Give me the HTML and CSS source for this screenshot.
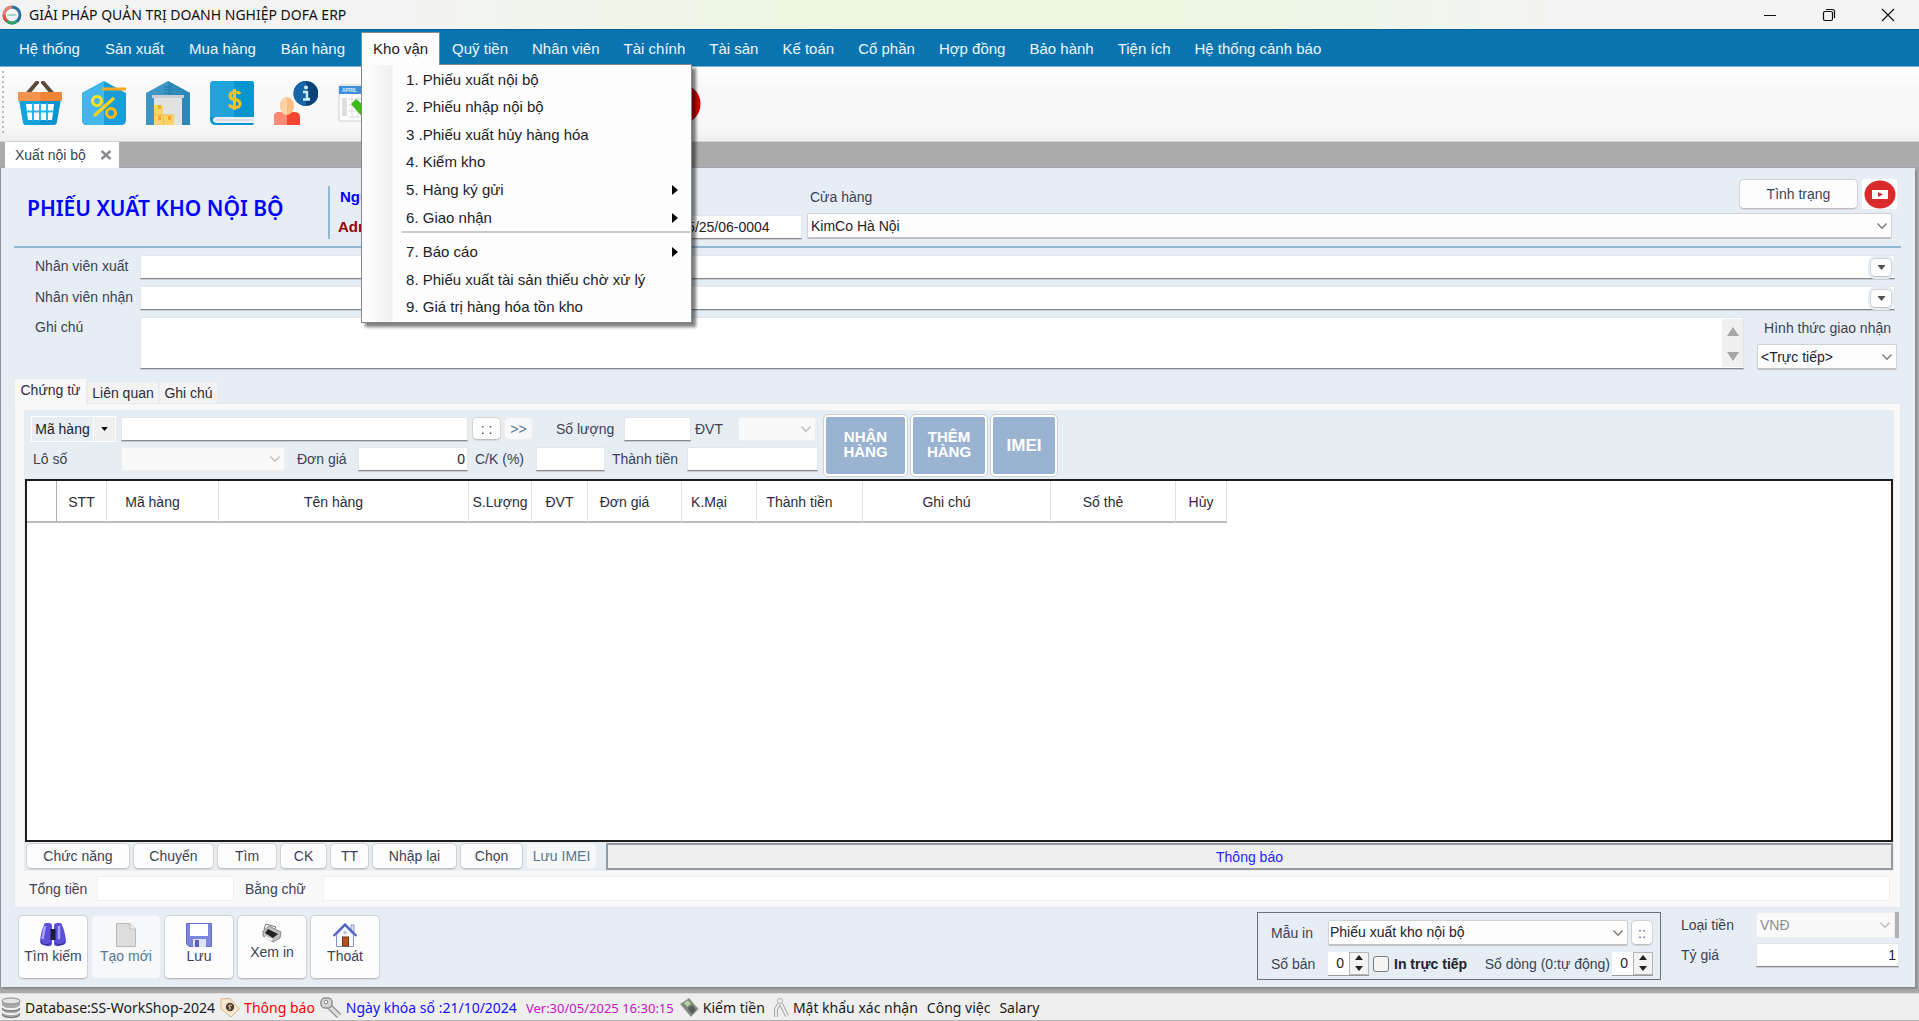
FILE: index.html
```html
<!DOCTYPE html>
<html lang="vi">
<head>
<meta charset="utf-8">
<title>GIẢI PHÁP QUẢN TRỊ DOANH NGHIỆP DOFA ERP</title>
<link rel="stylesheet" href="styles.css">
</head>
<body>
<svg class="sprite" aria-hidden="true">
  <symbol id="chevron" viewBox="0 0 12 8"><path d="M1.500 1.500L6 6.200L10.500 1.500" fill="none" stroke="currentColor" stroke-width="1.300"/></symbol>
  <symbol id="down" viewBox="0 0 10 6"><path d="M0 0H10L5 6Z" fill="currentColor"/></symbol>
  <symbol id="up" viewBox="0 0 10 6"><path d="M0 6H10L5 0Z" fill="currentColor"/></symbol>
  <symbol id="right" viewBox="0 0 6 10"><path d="M0 0V10L6 5Z" fill="currentColor"/></symbol>
</svg>
<div class="window">
  <header class="titlebar">
    <svg class="app-icon" width="20" height="20" viewBox="0 0 20 20" fill="none" stroke-width="3">
      <circle cx="10" cy="10" r="8" stroke="#2b6f9e"/>
      <path d="M10 2A8 8 0 0 0 2 10" stroke="#f08070"/>
      <path d="M2 10A8 8 0 0 0 5 16.200" stroke="#e2543c"/>
      <path d="M5 16.200A8 8 0 0 0 15 16.200" stroke="#2fa866"/>
      <path d="M5.500 10H14.500" stroke="#a9d5cf" stroke-width="2"/>
    </svg>
    <span class="app-title">GIẢI PHÁP QUẢN TRỊ DOANH NGHIỆP DOFA ERP</span>
    <div class="window-controls">
      <button aria-label="Minimize"><svg width="14" height="14" viewBox="0 0 14 14"><path d="M1 7.500H13" stroke="#111"/></svg></button>
      <button aria-label="Restore"><svg width="14" height="14" viewBox="0 0 14 14" fill="none" stroke="#111" stroke-width="1.200"><rect x="1.500" y="3.500" width="9" height="9" rx="1.500"/><path d="M4 1.500H10.500A2 2 0 0 1 12.500 3.500V10"/></svg></button>
      <button aria-label="Close"><svg width="14" height="14" viewBox="0 0 14 14"><path d="M1 1L13 13M13 1L1 13" stroke="#111" stroke-width="1.200"/></svg></button>
    </div>
  </header>

  <nav class="menubar">
    <a href="#">Hệ thống</a>
    <a href="#">Sản xuất</a>
    <a href="#">Mua hàng</a>
    <a href="#">Bán hàng</a>
    <div class="menu-open">
      <a href="#" class="current">Kho vận</a>
      <ul class="dropdown">
        <li><a href="#">1. Phiếu xuất nội bộ</a></li>
        <li><a href="#">2. Phiếu nhập nội bộ</a></li>
        <li><a href="#">3 .Phiếu xuất hủy hàng hóa</a></li>
        <li><a href="#">4. Kiểm kho</a></li>
        <li><a href="#">5. Hàng ký gửi<svg width="6" height="10"><use href="#right"/></svg></a></li>
        <li><a href="#">6. Giao nhận<svg width="6" height="10"><use href="#right"/></svg></a></li>
        <li class="separator"></li>
        <li><a href="#">7. Báo cáo<svg width="6" height="10"><use href="#right"/></svg></a></li>
        <li><a href="#">8. Phiếu xuất tài sản thiếu chờ xử lý</a></li>
        <li><a href="#">9. Giá trị hàng hóa tồn kho</a></li>
      </ul>
    </div>
    <a href="#">Quỹ tiền</a>
    <a href="#">Nhân viên</a>
    <a href="#">Tài chính</a>
    <a href="#">Tài sản</a>
    <a href="#">Kế toán</a>
    <a href="#">Cổ phần</a>
    <a href="#">Hợp đồng</a>
    <a href="#">Bảo hành</a>
    <a href="#">Tiện ích</a>
    <a href="#">Hệ thống cảnh báo</a>
  </nav>

  <div class="toolbar">
    <button aria-label="Bán hàng"><svg width="44" height="44" viewBox="0 0 44 44">
      <path d="M10 12L19 1.500M34 12L25 1.500" stroke="#5a4a3a" stroke-width="4" stroke-linecap="round"/>
      <path d="M1 18H43L39 41Q38.500 44 36 44H8Q5.500 44 5 41Z" fill="#0d93cf"/>
      <path d="M1 18H22V44H8Q5.500 44 5 41Z" fill="#12a3dc"/>
      <path d="M8 23H36L34 39H10Z" fill="#fff"/>
      <path d="M8 30.500H36M15 22V40M22 22V40M29 22V40" stroke="#29b6ee" stroke-width="2"/>
      <rect x="0" y="11" width="44" height="9" rx="1" fill="#f08537"/><path d="M0 11H22V20H1Q0 20 0 19Z" fill="#f4934b"/>
    </svg></button>
    <button aria-label="Khuyến mãi"><svg width="44" height="44" viewBox="0 0 44 44">
      <path d="M22 0L0 12V39Q0 44 5 44H39Q44 44 44 39V12Z" fill="#1b9bd7"/>
      <path d="M22 0L0 12V39Q0 44 5 44H22Z" fill="#45b6ec"/>
      <path d="M20 8H44" stroke="#f9a825" stroke-width="3"/>
      <circle cx="15" cy="20" r="4.500" fill="none" stroke="#ffe21f" stroke-width="3.200"/>
      <circle cx="29" cy="32" r="4.500" fill="none" stroke="#fdb811" stroke-width="3.200"/>
      <path d="M12 35L32 17" stroke="#ffd21a" stroke-width="3.200"/>
    </svg></button>
    <button aria-label="Kho"><svg width="44" height="44" viewBox="0 0 44 44">
      <path d="M22 0L0 12V44H44V12Z" fill="#3d96c6"/><path d="M22 0V44H44V12Z" fill="#2e88b8"/>
      <path d="M18 6H26M18 9H26M18 12H26" stroke="#1f78a7"/>
      <rect x="8" y="17" width="28" height="27" fill="#e2e2e2"/><rect x="6" y="14" width="32" height="3" fill="#c9ced3"/>
      <path d="M8 24H17V34H28V44H8Z" fill="#fbd36b"/>
      <path d="M8 34H28M17.500 34V44" stroke="#eebb45"/>
      <path d="M12 24H15V28H12ZM12 35H15V39H12ZM22 35H25V39H22Z" fill="#f0a92a"/>
    </svg></button>
    <button aria-label="Kế toán"><svg width="44" height="44" viewBox="0 0 44 44">
      <path d="M4 0H42Q44 0 44 2V42Q44 44 42 44H6Q0 44 0 38V4Q0 0 4 0Z" fill="#0894ce"/>
      <path d="M4 0H24V36H0V4Q0 0 4 0Z" fill="#22a3da"/>
      <path d="M44 36H7Q3 36 3 39Q3 42 7 42H44Z" fill="#eceff2"/><path d="M6 39H44" stroke="#c6cdd3"/>
      <path d="M30 13Q29 11 25 11Q20 11 20 15Q20 18 24.500 18.500Q30 19 30 23Q30 26.500 25 26.500Q20 26.500 19.500 23.500M24.500 8V29" fill="none" stroke="#fcc21b" stroke-width="3"/>
    </svg></button>
    <button aria-label="Thông tin khách hàng"><svg width="44" height="44" viewBox="0 0 44 44">
      <path d="M0 44V36Q0 31 6 31H20Q26 31 26 36V44Z" fill="#f2452f"/><path d="M0 44V36Q0 31 6 31H13V44Z" fill="#ff8a73"/>
      <ellipse cx="13" cy="25" rx="7" ry="9" fill="#fbbd84"/><path d="M13 16A7 9 0 0 0 13 34Z" fill="#ffd3a6"/>
      <circle cx="32" cy="12.500" r="12.500" fill="#0a4377"/><path d="M32 0A12.500 12.500 0 0 0 32 25Z" fill="#1665a8"/>
      <circle cx="32" cy="6.500" r="2" fill="#c9f0ff"/><path d="M29 11H33V18H36M29 18.500H36" fill="none" stroke="#c9f0ff" stroke-width="2.400"/>
    </svg></button>
    <button aria-label="Lịch"><svg width="44" height="44" viewBox="0 0 44 44">
      <rect x="1" y="4" width="42" height="36" rx="1" fill="#fdfdfd" stroke="#cfcfcf"/><rect x="1" y="5" width="42" height="8" fill="#3e8edb"/>
      <text x="4" y="11" font-size="5" font-weight="bold" fill="#dcefff">APRIL</text>
      <path d="M4 17H9V35H4Z" fill="#dedede"/><path d="M10 18H40M10 24H40M10 30H40M10 36H40M14 15V37M20 15V37" stroke="#dcdcdc"/>
      <path d="M13 23L18 18L30 28L38 14V24L26 38Z" fill="#3eb91f"/>
    </svg></button>
    <button class="far" aria-label="Video"><svg width="44" height="44" viewBox="0 0 44 44"><circle cx="22" cy="23" r="16" fill="#fff" stroke="#d60000" stroke-width="9"/></svg></button>
  </div>

  <div class="doc-tabs">
    <div class="doc-tab"><span>Xuất nội bộ</span>
      <button aria-label="Đóng"><svg width="12" height="10" viewBox="0 0 12 10"><path d="M1.500 1L10.500 9M10.500 1L1.500 9" stroke="#8a8a94" stroke-width="2.400"/></svg></button>
    </div>
  </div>

  <main class="form">
    <section class="form-head">
      <h1>PHIẾU XUẤT KHO NỘI BỘ</h1>
      <div class="user"><b class="user-label">Người</b><b class="user-name">Admin</b></div>
      <div class="code">
        <label for="code">Số phiếu cũ</label>
        <input id="code" class="box" value="PXNB5/25/06-0004">
      </div>
      <div class="store">
        <div class="store-top">
          <label for="store">Cửa hàng</label>
          <button class="btn status-btn">Tình trạng</button>
          <a href="#" class="video" aria-label="Video hướng dẫn"><svg width="35" height="30" viewBox="0 0 35 30"><rect width="35" height="30" fill="#fff"/><ellipse cx="18" cy="15.500" rx="15.500" ry="14" fill="#d92b2b"/><rect x="10" y="11" width="16" height="9" fill="#fff"/><path d="M16 13L21 15.500L16 18Z" fill="#d92b2b"/></svg></a>
        </div>
        <div class="combo store-combo"><select id="store"><option>KimCo Hà Nội</option></select><svg width="12" height="8"><use href="#chevron"/></svg></div>
      </div>
    </section>

    <section class="details">
      <label for="giver">Nhân viên xuất</label>
      <div class="lookup"><input id="giver"><button class="btn" aria-label="Chọn nhân viên xuất"><svg width="9" height="5" viewBox="0 0 10 6"><use href="#down"/></svg></button></div>
      <label for="taker">Nhân viên nhận</label>
      <div class="lookup"><input id="taker"><button class="btn" aria-label="Chọn nhân viên nhận"><svg width="9" height="5" viewBox="0 0 10 6"><use href="#down"/></svg></button></div>
      <label for="note" class="note-label">Ghi chú</label>
      <div class="note-row">
        <div class="note"><textarea id="note"></textarea>
          <div class="scroll"><svg width="12" height="9" viewBox="0 0 10 6" preserveAspectRatio="none"><use href="#up"/></svg><svg width="12" height="9" viewBox="0 0 10 6" preserveAspectRatio="none"><use href="#down"/></svg></div>
        </div>
        <div class="delivery">
          <label for="delivery">Hình thức giao nhận</label>
          <div class="combo"><select id="delivery"><option>&lt;Trực tiếp&gt;</option></select><svg width="12" height="8"><use href="#chevron"/></svg></div>
        </div>
      </div>
    </section>

    <div class="tabs" role="tablist">
      <button role="tab" class="active" aria-selected="true">Chứng từ</button>
      <button role="tab" class="tab-related">Liên quan</button>
      <button role="tab" class="tab-note">Ghi chú</button>
    </div>
    <section class="panel">
      <div class="work">
        <div class="entry">
          <div class="entry-fields">
            <div class="entry-row">
              <div class="split"><button id="code-mode">Mã hàng</button><button aria-label="Kiểu mã"><svg width="7" height="4" viewBox="0 0 10 6"><use href="#down"/></svg></button></div>
              <input class="box w-item" aria-label="Mã hàng">
              <button class="btn small">: :</button>
              <button class="btn small flat">&gt;&gt;</button>
              <label class="l-qty" for="qty">Số lượng</label><input id="qty" class="box w-qty">
              <label class="l-unit" for="unit">ĐVT</label>
              <div class="combo off w-unit"><select id="unit" disabled></select><svg width="12" height="8"><use href="#chevron"/></svg></div>
            </div>
            <div class="entry-row">
              <label class="l-lot" for="lot">Lô số</label>
              <div class="combo off w-lot"><select id="lot" disabled></select><svg width="12" height="8"><use href="#chevron"/></svg></div>
              <label class="l-price" for="price">Đơn giá</label><input id="price" class="box num w-price" value="0">
              <label class="l-disc" for="disc">C/K (%)</label><input id="disc" class="box w-disc">
              <label class="l-sum" for="sum">Thành tiền</label><input id="sum" class="box w-sum">
            </div>
          </div>
          <button class="big b1">NHẬN<br>HÀNG</button>
          <button class="big b2">THÊM<br>HÀNG</button>
          <button class="big b3">IMEI</button>
        </div>
        <div class="grid">
          <table>
            <colgroup><col class="c30"><col class="c50"><col class="c112"><col class="c250"><col class="c63"><col class="c56"><col class="c94"><col class="c75"><col class="c106"><col class="c188"><col class="c125"><col class="c51"></colgroup>
            <thead><tr><th class="corner"></th><th>STT</th><th class="sort">Mã hàng</th><th class="sort">Tên hàng</th><th>S.Lượng</th><th>ĐVT</th><th class="sort">Đơn giá</th><th class="sort">K.Mại</th><th class="sort">Thành tiền</th><th class="sort">Ghi chú</th><th class="sort">Số thẻ</th><th>Hủy</th></tr></thead>
            <tbody></tbody>
          </table>
        </div>
        <div class="actions">
          <button class="btn a1">Chức năng</button><button class="btn a2">Chuyển</button><button class="btn a3">Tìm</button><button class="btn a4">CK</button><button class="btn a5">TT</button><button class="btn a6">Nhập lại</button><button class="btn a7">Chọn</button><button class="btn a8 flat">Lưu IMEI</button>
          <div class="notice">Thông báo</div>
        </div>
      </div>
      <div class="totals">
        <label class="t1" for="total">Tổng tiền</label><input id="total" class="plain total" readonly>
        <label class="t2" for="words">Bằng chữ</label><input id="words" class="plain words" readonly>
      </div>
    </section>

    <footer class="form-foot">
      <div class="commands">
        <button class="btn"><svg width="26" height="24" viewBox="0 0 26 24"><path d="M4 2Q4 0 6 0H9Q12 0 12 3V20Q12 24 7 23L3 22Q0 21 0 18Q1 8 4 2ZM22 2Q22 0 20 0H17Q14 0 14 3V20Q14 24 19 23L23 22Q26 21 26 18Q25 8 22 2Z" fill="#5c50d8"/><path d="M10.500 6H15.500V17H10.500Z" fill="#1c1c3c"/><path d="M5 3L2.500 16M19 3V16" stroke="#a9a4ff" stroke-width="2.500"/><path d="M1 19Q5 24 11 20M15 20Q20 24 25 19" stroke="#2f2a8c" fill="none"/></svg>Tìm kiếm</button>
        <button class="btn flat"><svg width="20" height="24" viewBox="0 0 20 24"><path d="M.5 .5H14L19.500 6V23.500H.5Z" fill="#dcdcdc" stroke="#b9b9b9"/><path d="M14 .5V6H19.500" fill="#eee" stroke="#b9b9b9"/></svg>Tạo mới</button>
        <button class="btn"><svg width="26" height="24" viewBox="0 0 26 24"><path d="M.5 .5H25.500V23.500H3L.5 21Z" fill="#7d86de" stroke="#666fc4"/><path d="M4 1H22V13H4Z" fill="#fff"/><path d="M7 16H20V24H7Z" fill="#dfe2f5"/><rect x="9" y="17" width="4" height="7" fill="#5a63b8"/></svg>Lưu</button>
        <button class="btn high"><svg width="20" height="20" viewBox="0 0 20 20"><path d="M4 1L14 4L11 8L2 6Z" fill="#fff" stroke="#777"/><path d="M1 8L7 3L19 9L18 15L11 19L1 13Z" fill="#bfbfbf" stroke="#888"/><path d="M6 6L16 11L11 15L3 10Z" fill="#222"/><path d="M3 14L10 17" stroke="#fff" stroke-width="2"/></svg>Xem in</button>
        <button class="btn"><svg width="24" height="24" viewBox="0 0 24 24"><path d="M18 2H21V9H18Z" fill="#dfe3f6" stroke="#8a93c8"/><path d="M3.500 12L12 3L20.500 12V23.500H3.500Z" fill="#f6f7fd" stroke="#8a93c8"/><path d="M.5 13L12 1.500L23.500 13" fill="none" stroke="#4c62c0" stroke-width="2.200"/><rect x="9.500" y="14" width="6" height="9" fill="#b5541c" stroke="#6d3413"/><circle cx="12" cy="9.500" r="1.500" fill="#b7bcd6"/></svg>Thoát</button>
      </div>
      <div class="print">
        <div class="print-row">
          <label class="p1" for="tpl">Mẫu in</label>
          <div class="combo tpl"><select id="tpl"><option>Phiếu xuất kho nội bộ</option></select><svg width="12" height="8"><use href="#chevron"/></svg></div>
          <button class="btn dots">::</button>
        </div>
        <div class="print-row">
          <label class="p1" for="copies">Số bản</label>
          <div class="spin"><input id="copies" type="number" value="0"><span><svg width="8" height="5" viewBox="0 0 10 6"><use href="#up"/></svg><svg width="8" height="5" viewBox="0 0 10 6"><use href="#down"/></svg></span></div>
          <label class="direct"><input type="checkbox">In trực tiếp</label>
          <label class="p2" for="lines">Số dòng (0:tự động)</label>
          <div class="spin"><input id="lines" type="number" value="0"><span><svg width="8" height="5" viewBox="0 0 10 6"><use href="#up"/></svg><svg width="8" height="5" viewBox="0 0 10 6"><use href="#down"/></svg></span></div>
        </div>
      </div>
      <div class="money">
        <label for="cur">Loại tiền</label>
        <div class="combo off cur"><select id="cur" disabled><option>VNĐ</option></select><svg width="12" height="8"><use href="#chevron"/></svg></div>
        <label for="rate">Tỷ giá</label>
        <input id="rate" class="box num" value="1">
      </div>
    </footer>
  </main>

  <footer class="statusbar">
    <svg width="20" height="22" viewBox="0 0 20 22"><path d="M1 4V18Q1 21 10 21Q19 21 19 18V4Z" fill="#a9a9a9"/><ellipse cx="10" cy="4" rx="9" ry="3" fill="#e2e2e2" stroke="#8a8a8a"/><path d="M1 9Q2 12 10 12Q18 12 19 9M1 14Q2 17 10 17Q18 17 19 14" fill="none" stroke="#f2f2f2" stroke-width="2"/><path d="M1 11Q2 14 10 14Q18 14 19 11M1 17Q2 20 10 20.500Q18 20 19 17" fill="none" stroke="#6f6f6f"/></svg>
    <span>Database:SS-WorkShop-2024</span>
    <svg width="20" height="22" viewBox="0 0 20 22"><path d="M1 2L10 1.500L19.500 12L11 20L1 12Z" fill="#f9e8ce" stroke="#d3b48b"/><circle cx="10" cy="10" r="4.200" fill="#4d3e30"/><path d="M12 8.500Q8 7 9 10Q13 11 8.500 12.500" fill="none" stroke="#f6e3c6"/></svg>
    <span class="red">Thông báo</span>
    <svg width="22" height="22" viewBox="0 0 22 22"><path d="M9 9L19 19" stroke="#8d8d8d" stroke-width="6"/><path d="M9 9L19 19" stroke="#dedede" stroke-width="3.500"/><rect x="1" y="1" width="11" height="10" rx="4" fill="#d5d5d5" stroke="#909090" stroke-width="1.500"/><circle cx="6" cy="5" r="1.700" fill="#fff" stroke="#888"/></svg>
    <span class="blue">Ngày khóa sổ :21/10/2024</span>
    <span class="magenta">Ver:30/05/2025 16:30:15</span>
    <svg width="20" height="22" viewBox="0 0 20 22"><path d="M1 7L10 1L19.500 12L12 20Z" fill="#7f867d" stroke="#c7cac5"/><path d="M5 6L9 3.500L12 7L8 9.500Z" fill="#b8d8a0"/><path d="M9 11L13 8.500L17 13L12.500 17Z" fill="#565d5a"/></svg>
    <span class="count">Kiểm tiền</span>
    <svg width="16" height="22" viewBox="0 0 16 22" fill="none"><circle cx="7" cy="4" r="2.500" stroke="#b0b0b0"/><path d="M6 7L3 12L3 20M8 7L11 13L14 19" stroke="#a8a8a8" stroke-width="4"/><path d="M6 7L3 12L3 20M8 7L11 13L14 19" stroke="#eee" stroke-width="2"/></svg>
    <span>Mật khẩu xác nhận</span>
    <span>Công việc</span>
    <span>Salary</span>
  </footer>
</div>
</body>
</html>
```
FILE: styles.css
```css
* { box-sizing: border-box; }
body { margin: 0; font: 14px/18px "Liberation Sans", Arial, sans-serif; color: #3c4254; background: #ababab; }
button, input, select, textarea { font: inherit; color: inherit; margin: 0; padding: 0; border: 0; }
button { background: none; }
input, textarea, select { outline: 0; border-radius: 0; color: #22222c; min-width: 0; }
a { color: inherit; text-decoration: none; }
svg { display: block; flex: none; }
label { white-space: nowrap; }
.sprite { position: absolute; width: 0; height: 0; }
.window { display: flex; flex-direction: column; min-height: 100vh; }

.titlebar { display: flex; align-items: center; height: 29px; padding: 0 2px; background: linear-gradient(90deg, #f3f3f3 20%, #ecf7e0 45%, #ebf7e4 65%, #f3f3f3 82%); }
.app-title { margin-left: 7px; font: 14px/20px "Noto Sans", sans-serif; color: #111; }
.window-controls { display: flex; margin-left: auto; }
.window-controls button { display: grid; place-items: center; width: 59px; height: 29px; }

.menubar { display: flex; height: 38px; padding: 2px 0 1px 7px; background: #0a74b0; border-bottom: 1px solid #7fb2d0; border-top: 1px solid #08659b; font-size: 15px; color: #eef6fb; }
.menubar > a { padding: 0 13px 0 12px; line-height: 33px; white-space: nowrap; }
.menu-open { position: relative; margin-left: 3px; }
.menu-open ~ a { padding: 0 12px; }
.current { display: block; position: relative; z-index: 2; background: #fdfdfd; color: #1c1c24; border: 1px solid #84888c; border-bottom: 0; line-height: 32px; padding: 0 11px; white-space: nowrap; }
.dropdown { position: absolute; z-index: 1; top: 32px; left: 0; width: 331px; height: 259px; margin: 0; padding: 1px; list-style: none; display: flex; flex-direction: column; color: #1c1c24; background: linear-gradient(90deg, #fdfdfd 5px, #f0f0f0 30px, #fdfdfd 31px); border: 1px solid #84888c; box-shadow: 4px 4px 3px rgba(0,0,0,.5); }
.dropdown li { flex: 1; }
.dropdown a { display: flex; align-items: center; justify-content: space-between; height: 100%; padding: 0 12px 0 43px; }
.dropdown .separator { flex: 0 0 7px; margin-left: 39px; border-top: 2px solid #c9c9c9; }
.dropdown svg { color: #000; }

.toolbar { display: flex; align-items: center; gap: 20px; height: 75px; padding: 0 0 2px 2px; background: linear-gradient(#fff, #f8f8f8 30%, #f8f8f8 80%, #efefef); border-bottom: 1px solid #d2d2d2; }
.toolbar::before { content: ""; width: 2px; height: 64px; margin-right: -6px; background: repeating-linear-gradient(#b9b9b9 0 2px, transparent 2px 5px); }
.toolbar button { width: 44px; height: 44px; }
.toolbar .far { margin-left: 256px; }

.doc-tabs { height: 26px; padding-left: 5px; background: #ababab; border-bottom: 1px solid #9ca4b0; }
.doc-tab { display: flex; align-items: center; justify-content: space-between; width: 114px; height: 26px; padding: 0 7px 0 10px; background: #fff; white-space: nowrap; }

.form { flex: 1; display: flex; flex-direction: column; margin: 0 4px 6px 0; padding: 0 14px 0 13px; background: #e6edf5; border-left: 1px solid #8d93a5; box-shadow: 2px 2px 2px #888; }
.box, .lookup, .note { background: #fff; border: 1px solid #e4e7ea; border-bottom: 1px solid #85888c; box-shadow: 0 1px 0 #c9cdd1; }
.box { height: 24px; padding: 0 5px; }
.num { text-align: right; }
.btn { background: #fdfdfd; border: 1px solid #d0d2d4; border-bottom-color: #bcbfc2; border-radius: 5px; box-shadow: 0 1px 0 #d6d9dc; white-space: nowrap; }
.flat { background: #f7f8f9; border-color: #eceff2; box-shadow: none; color: #5a7690; }
.combo { position: relative; height: 26px; }
.combo select { appearance: none; width: 100%; height: 100%; padding: 0 24px 0 3px; background: #fdfdfd; border: 1px solid #cfd2d5; border-bottom: 2px solid #c0c2c4; border-radius: 2px; }
.combo svg { position: absolute; right: 4px; top: 9px; color: #777; pointer-events: none; }
.combo.off select { background: #f9f9f9; border: 1px solid #eceef0; color: #8e8e90; opacity: 1; }
.combo.off svg { color: #bbb; }

.form-head { display: grid; grid-template-columns: 314px 232px 242px 1fr; padding-bottom: 7px; height: 80px; border-bottom: 2px solid #93b8d4; }
h1 { margin: 0; align-self: center; padding: 8px 0 0 13px; font: 600 21px/30px "Noto Sans", sans-serif; color: #00f; white-space: nowrap; }
.user { display: flex; flex-direction: column; justify-content: space-between; margin: 18px 0 0; padding: 2px 0 3px 8px; border-left: 2px solid #93b8d4; font-size: 15px; }
.user-label { color: #00f; padding-left: 2px; }
.user-name { color: #900; }
.code { display: flex; flex-direction: column; justify-content: flex-end; gap: 9px; }
.code label { padding-left: 58px; }
.code .box { padding-left: 88px; }
.store { padding-left: 5px; }
.store-top { display: flex; align-items: flex-start; height: 45px; padding: 11px 4px 0 3px; gap: 4px; }
.store-top label { margin: 9px auto 0 0; }
.status-btn { width: 119px; height: 30px; }
.store-combo { margin-right: 9px; }

.details { display: grid; grid-template-columns: 105px 1fr; row-gap: 7px; padding: 7px 4px 8px 21px; margin-right: 2px; }
.details > label { line-height: 22px; }
.lookup { display: flex; height: 24px; padding: 1px; }
.lookup input { flex: 1; background: #fff; }
.lookup .btn { display: grid; place-items: center; width: 22px; height: 19px; margin: 1px 1px 0 2px; color: #555; outline: 2px solid #e6edf5; }
.details > .note-label { line-height: 20px; }
.note-row { display: flex; gap: 13px; margin-right: -2px; }
.note { flex: 1; display: flex; height: 52px; }
.note textarea { flex: 1; resize: none; background: #fff; }
.scroll { display: flex; flex-direction: column; justify-content: space-between; align-items: center; width: 21px; padding: 8px 0 6px; margin: 1px 0; background: #f0f0f0; color: #a6a6a6; }
.delivery { width: 140px; }
.delivery label { display: block; padding: 0 6px 0 0; text-align: right; line-height: 22px; margin-bottom: 5px; }

.tabs { display: flex; align-items: flex-end; height: 25px; }
.tabs button { height: 22px; background: #f3f3f3; border: 1px solid #e9ebee; border-bottom: 0; color: #2c2c38; line-height: 20px; white-space: nowrap; }
.tabs .active { width: 73px; height: 26px; padding-bottom: 4px; margin-bottom: -1px; background: #f9f9f9; position: relative; }
.tab-related { width: 72px; }
.tab-note { width: 59px; }
.panel { flex: 1; display: flex; flex-direction: column; padding: 6px 6px 5px 9px; background: #f9f9f9; border: 1px solid #e6e8ea; }
.work { flex: 1; display: flex; flex-direction: column; padding: 0 1px; background: #e6edf3; }

.entry { display: flex; height: 69px; padding: 5px 0 0 6px; }
.entry-fields { width: 793px; display: flex; flex-direction: column; gap: 5px; padding-top: 1px; }
.entry-row { display: flex; align-items: center; height: 25px; }
.entry .combo { height: 24px; }
.entry .combo svg { top: 8px; }
.split { display: flex; width: 85px; height: 26px; border: 1px solid #fff; margin-right: 5px; color: #22222c; }
.split button:first-child { flex: 1; border-right: 1px solid #fff; white-space: nowrap; }
.split button:last-child { width: 21px; background: #f0f0f0; display: grid; place-items: center; color: #000; }
.w-item { width: 347px; margin-right: 4px; }
.small { width: 29px; height: 23px; margin-right: 3px; line-height: 18px; }
.l-qty { width: 88px; padding-left: 20px; }
.w-qty { width: 67px; }
.l-unit { width: 47px; padding-left: 4px; }
.w-unit { width: 78px; }
.l-lot { width: 90px; padding-left: 2px; }
.w-lot { width: 164px; }
.l-price { width: 73px; padding-left: 12px; }
.w-price { width: 110px; padding-right: 2px; }
.l-disc { width: 68px; padding-left: 7px; }
.w-disc { width: 69px; }
.l-sum { width: 82px; padding-left: 7px; }
.w-sum { width: 131px; }
.big { height: 61px; margin-right: 4px; padding-bottom: 4px; background: #9ab3d1; border: 2px solid #fff; border-radius: 4px; outline: 1px solid #ccd0d4; color: #fff; font: bold 15px/15px "Liberation Sans", sans-serif; }
.b1 { width: 83px; }
.b2 { width: 76px; }
.b3 { width: 66px; font-size: 17px; padding-bottom: 0; }

.grid { flex: 1; min-height: 200px; background: #fff; border: 2px solid #1d1d1f; overflow: auto; }
table { width: 1200px; table-layout: fixed; border-collapse: separate; border-spacing: 0; }
th { height: 42px; padding: 2px 0 0; font-weight: normal; color: #2c2c38; border-right: 1px solid #dfdfdf; border-bottom: 2px solid #bcbcbc; white-space: nowrap; }
th.corner { border-right: 1px solid #b0b0b0; }
th.sort { padding-right: 20px; }
.c30 { width: 30px; } .c50 { width: 50px; } .c112 { width: 112px; } .c250 { width: 250px; } .c63 { width: 63px; } .c56 { width: 56px; }
.c94 { width: 94px; } .c75 { width: 75px; } .c106 { width: 106px; } .c188 { width: 188px; } .c125 { width: 125px; } .c51 { width: 51px; }

.actions { display: flex; gap: 3px; height: 29px; padding: 1px 0 1px 1px; }
.actions .btn { height: 26px; }
.a1 { width: 104px; } .a2 { width: 81px; } .a3 { width: 60px; } .a4 { width: 47px; } .a5 { width: 39px; } .a6 { width: 85px; } .a7 { width: 63px; } .a8 { width: 71px; }
.notice { flex: 1; margin-left: 6px; text-align: center; line-height: 24px; color: #22f; background: #efefef; border: 2px solid #9699a0; }
.totals { display: flex; align-items: center; padding: 5px 4px 1px 5px; height: 31px; }
.plain { height: 25px; background: #fff; border: 1px solid #f0f0f0; }
.t1 { width: 68px; } .t2 { width: 89px; padding-left: 11px; }
.total { width: 137px; }
.words { flex: 1; }

.form-foot { display: flex; align-items: flex-start; padding: 4px 2px 7px 4px; }
.commands { display: flex; gap: 3px; margin: 3px auto 0 0; }
.commands .btn { display: flex; flex-direction: column; align-items: center; width: 70px; height: 64px; padding: 7px 0 0; }
.commands .btn svg { height: 24px; }
.commands .high svg { height: 20px; }
.print { display: flex; flex-direction: column; gap: 6px; width: 404px; height: 68px; padding: 7px 7px 0 13px; border: 1px solid #6c7076; }
.print-row { display: flex; align-items: center; height: 25px; }
.p1 { width: 57px; }
.p2 { margin-left: auto; margin-right: 2px; }
.tpl { flex: 1; margin-right: 3px; }
.tpl select { padding-left: 1px; }
.dots { width: 22px; height: 25px; line-height: 16px; color: #63508c; }
.spin { display: flex; width: 41px; height: 24px; background: #fff; border-bottom: 1px solid #999; }
.spin input { width: 16px; text-align: right; background: #fff; appearance: textfield; }
.spin input::-webkit-inner-spin-button { display: none; }
.spin span { display: flex; flex-direction: column; align-items: center; justify-content: space-around; width: 20px; margin-left: auto; background: #f3f3f3; border: 1px solid #b5b5b5; color: #222; }
.direct { display: flex; align-items: center; gap: 5px; margin-left: 4px; font-weight: bold; color: #22222c; }
.direct input { appearance: none; width: 16px; height: 16px; border: 1px solid #7b7b7b; border-radius: 3px; background: #f4f4f4; }
.money { display: grid; grid-template-columns: 75px 143px; row-gap: 5px; margin-left: 20px; align-items: center; }
.cur { border-right: 4px solid #b0b0b0; }
.money .box { padding-right: 2px; }

.statusbar { display: flex; align-items: center; height: 28px; padding: 2px 0 0 1px; background: #efefef; border-top: 1px solid #dcdcdc; border-bottom: 1px solid #b5b5b5; font: 14px/20px "Noto Sans", sans-serif; color: #1a1a1a; white-space: nowrap; }
.statusbar span { margin: 0 5px 0 4px; }
.statusbar .red { color: #f00; }
.statusbar .blue { color: #11f; }
.statusbar .magenta { color: #c814c8; font-size: 13px; }
.statusbar .count { margin-right: 8px; }
```
